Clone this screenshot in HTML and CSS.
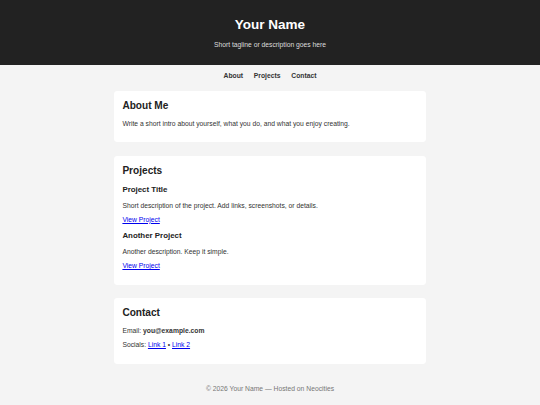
FILE: index.html
```html
<!DOCTYPE html>
<html lang="en">
<head>
<meta charset="utf-8">
<title>Your Name</title>
<link rel="stylesheet" href="styles.css">
</head>
<body>
<header class="site-header">
  <h1 class="site-title">Your Name</h1>
  <p class="tagline">Short tagline or description goes here</p>
</header>
<nav class="site-nav">
  <a href="#about">About</a>
  <a href="#projects">Projects</a>
  <a href="#contact">Contact</a>
</nav>
<main class="content">
  <section class="card" id="about">
    <h2>About Me</h2>
    <p>Write a short intro about yourself, what you do, and what you enjoy creating.</p>
  </section>
  <section class="card" id="projects">
    <h2>Projects</h2>
    <h3>Project Title</h3>
    <p>Short description of the project. Add links, screenshots, or details.</p>
    <p><a href="#" class="link">View Project</a></p>
    <h3>Another Project</h3>
    <p>Another description. Keep it simple.</p>
    <p><a href="#" class="link">View Project</a></p>
  </section>
  <section class="card" id="contact">
    <h2>Contact</h2>
    <p>Email: <strong>you@example.com</strong></p>
    <p>Socials: <a href="#" class="link">Link 1</a> • <a href="#" class="link">Link 2</a></p>
  </section>
</main>
<footer class="site-footer">© 2026 Your Name — Hosted on Neocities</footer>
</body>
</html>
```

FILE: styles.css
```css
html, body {
  margin: 0;
  padding: 0;
}
body {
  background: #f4f4f4;
  color: #333;
  font-family: "Liberation Sans", Arial, sans-serif;
  font-size: 6.75px;
}
.site-header {
  background: #222;
  color: #fff;
  text-align: center;
  height: 65px;
  box-sizing: border-box;
  padding-top: 17px;
}
.site-title {
  margin: 0;
  font-size: 13.5px;
  font-weight: bold;
}
.tagline {
  margin: 9px 0 0;
  color: #ddd;
}
.site-nav {
  display: flex;
  justify-content: center;
  gap: 10.8px;
  padding: 7px 0 5px;
}
.site-nav a {
  color: #333;
  font-weight: bold;
  text-decoration: none;
}
.content {
  max-width: 312px;
  margin: 0 auto;
  padding-top: 7px;
  display: flex;
  flex-direction: column;
  gap: 13.5px;
}
.card {
  background: #fff;
  border-radius: 3.4px;
  padding: 9px 8.4px 8.4px;
}
.card h2 {
  margin: 0 0 9px;
  font-size: 10.1px;
  color: #222;
}
.card h3 {
  margin: 8.5px 0 8px;
  font-size: 7.9px;
  color: #222;
}
.card p {
  margin: 7px 0;
}
.link {
  color: #0000ee;
}
.site-footer {
  text-align: center;
  color: #777;
  padding: 21px 0;
}
```
